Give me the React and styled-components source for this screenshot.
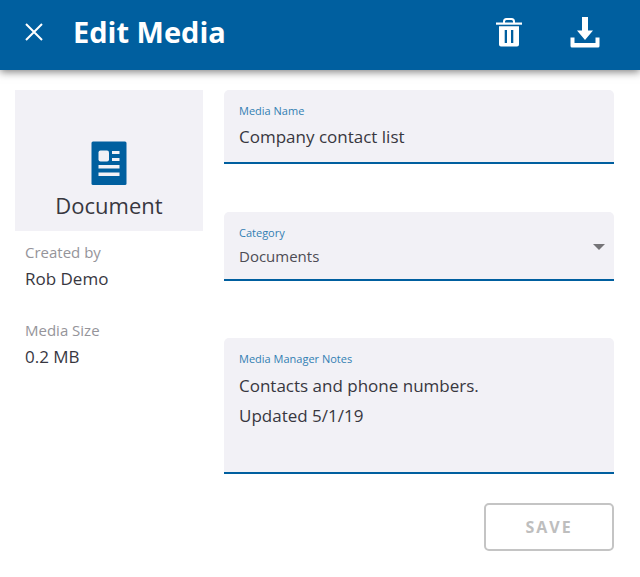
import styled, { createGlobalStyle } from 'styled-components';

const App = () => {
  return (
    <>
      <GlobalStyle />
      <Header>
        <CloseButton type="button" aria-label="Close">
          <svg width="18" height="18" viewBox="0 0 18 18" fill="none" stroke="currentColor" strokeWidth="2">
            <path d="M1 1L17 17M17 1L1 17" />
          </svg>
        </CloseButton>
        <Title>Edit Media</Title>
        <Actions>
          <IconButton type="button" aria-label="Delete">
            <svg width="26" height="30" viewBox="0 0 26 30">
              <path
                fill="none"
                stroke="currentColor"
                strokeWidth="2"
                d="M8 6V4.500Q8 2 10.500 2H15.500Q18 2 18 4.500V6"
              />
              <path fill="currentColor" d="M0 5.500H26V7.700H0Z" />
              <path
                fill="currentColor"
                fillRule="evenodd"
                d="M3 9.300H23V27.500Q23 29.500 21 29.500H5Q3 29.500 3 27.500ZM8.700 13V26H11V13ZM15 13V26H17.300V13Z"
              />
            </svg>
          </IconButton>
          <IconButton type="button" aria-label="Download">
            <svg width="30" height="32" viewBox="0 0 30 32" fill="currentColor">
              <path d="M12 1H18V14.500H23L15 24L7 14.500H12Z" />
              <path d="M0.500 21.500H4.500V27H25.500V21.500H29.500V30Q29.500 31.500 28 31.500H2Q0.500 31.500 0.500 30Z" />
            </svg>
          </IconButton>
        </Actions>
      </Header>

      <Content>
        <aside>
          <Preview>
            <svg width="36" height="44" viewBox="0 0 36 44">
              <rect x="0.500" y="0.500" width="35" height="43.500" rx="1.500" fill="#005f9f" />
              <g fill="#f2f1f6">
                <rect x="7.500" y="9.500" width="10.500" height="11" rx="2" />
                <path d="M21 10H28.500V13H21ZM21 17H28.500V20H21ZM7.500 24H28.500V27.500H7.500ZM7.500 31.500H28.500V35H7.500Z" />
              </g>
            </svg>
            <PreviewLabel>Document</PreviewLabel>
          </Preview>
          <Details>
            <DetailLabel>Created by</DetailLabel>
            <DetailValue>Rob Demo</DetailValue>
            <DetailLabel>Media Size</DetailLabel>
            <DetailValue>0.2 MB</DetailValue>
          </Details>
        </aside>

        <Form onSubmit={(e) => e.preventDefault()}>
          <Field $space={48}>
            <Label htmlFor="media-name">Media Name</Label>
            <TextInput id="media-name" type="text" defaultValue="Company contact list" />
          </Field>
          <Field $space={57}>
            <Label htmlFor="category">Category</Label>
            <SelectRow>
              <Select id="category" defaultValue="Documents">
                <option>Documents</option>
                <option>Images</option>
                <option>Videos</option>
              </Select>
              <svg width="12" height="6" viewBox="0 0 12 6" aria-hidden="true">
                <path fill="#757477" d="M0 0H12L6 6Z" />
              </svg>
            </SelectRow>
          </Field>
          <Field $space={29}>
            <Label htmlFor="notes">Media Manager Notes</Label>
            <TextArea id="notes" rows={3} defaultValue={'Contacts and phone numbers.\nUpdated 5/1/19'} />
          </Field>
          <SaveButton type="submit" disabled>SAVE</SaveButton>
        </Form>
      </Content>
    </>
  );
};

const GlobalStyle = createGlobalStyle`
  * {
    box-sizing: border-box;
  }

  body {
    margin: 0;
    background-color: #fff;
    color: #38373f;
    font-family: "Open Sans", sans-serif;
  }

  svg {
    display: block;
    flex: none;
  }
`;

const Header = styled.header`
  display: flex;
  align-items: center;
  height: 70px;
  padding: 0 40px 6px 25px;
  background-color: #005f9f;
  color: #fff;
  box-shadow: 0 2px 8px rgba(0, 0, 0, 0.5);
`;

const IconButton = styled.button`
  padding: 0;
  border: 0;
  background: none;
  color: inherit;
  cursor: pointer;
`;

const CloseButton = styled(IconButton)`
  margin-right: 30px;
`;

const Title = styled.h1`
  margin: 0;
  font-size: 29px;
  line-height: 40px;
  font-weight: 700;
`;

const Actions = styled.div`
  display: flex;
  align-items: center;
  gap: 48px;
  margin-left: auto;
`;

const Content = styled.main`
  display: grid;
  grid-template-columns: 188px 1fr;
  gap: 21px;
  padding: 20px 26px 26px 15px;
`;

const Preview = styled.div`
  display: flex;
  flex-direction: column;
  align-items: center;
  padding: 51px 0 10px;
  background-color: #f2f1f6;
`;

const PreviewLabel = styled.div`
  margin-top: 4px;
  font-size: 22px;
  line-height: 32px;
`;

const Details = styled.dl`
  margin: 0;
  padding: 9px 10px;
`;

const DetailLabel = styled.dt`
  font-size: 15px;
  line-height: 24px;
  color: #95949a;
`;

const DetailValue = styled.dd`
  margin: 0 0 24px;
  font-size: 17px;
  line-height: 30px;
`;

const Form = styled.form`
  display: flex;
  flex-direction: column;
`;

const Field = styled.div`
  display: flex;
  flex-direction: column;
  margin-bottom: ${({ $space }) => $space}px;
  padding: 12px 9px 10px 15px;
  border-bottom: 2px solid #005f9f;
  border-radius: 5px 5px 0 0;
  background-color: #f2f1f6;
`;

const Label = styled.label`
  font-size: 11px;
  line-height: 18px;
  color: #337fb3;
`;

const TextInput = styled.input`
  width: 100%;
  height: 32px;
  margin: 0;
  padding: 0;
  border: 0;
  outline: 0;
  background: none;
  color: inherit;
  font-family: inherit;
  font-size: 17px;
`;

const SelectRow = styled.div`
  display: flex;
  align-items: flex-start;

  svg {
    margin-top: 2px;
    pointer-events: none;
  }
`;

const Select = styled.select`
  flex: 1;
  height: 27px;
  padding: 0;
  border: 0;
  outline: 0;
  appearance: none;
  background: none;
  color: #4d4c54;
  font-family: inherit;
  font-size: 15px;
`;

const TextArea = styled.textarea`
  width: 100%;
  margin: 0;
  padding: 3px 0 1px;
  border: 0;
  outline: 0;
  resize: none;
  background: none;
  color: inherit;
  font-family: inherit;
  font-size: 17px;
  line-height: 30px;
`;

const SaveButton = styled.button`
  align-self: flex-end;
  width: 130px;
  height: 48px;
  border: 2px solid #c4c4c4;
  border-radius: 5px;
  background-color: #fff;
  color: #bebebe;
  font-family: inherit;
  font-size: 16px;
  font-weight: 700;
  letter-spacing: 2px;
`;

export default App;
